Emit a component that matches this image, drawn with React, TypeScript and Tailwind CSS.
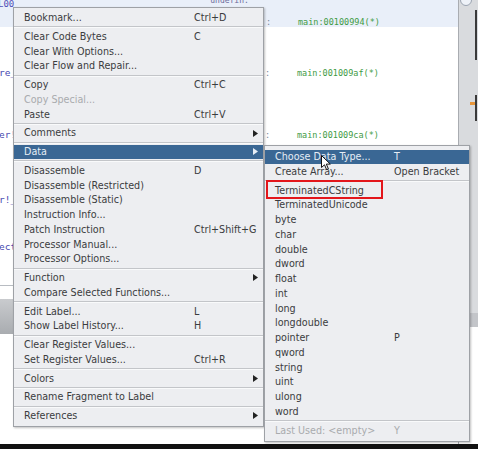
import React from "react";

type Item =
  | { sep: true }
  | {
      sep?: false;
      label: string;
      key?: string;
      sub?: boolean;
      disabled?: boolean;
      active?: boolean;
    };

const mainItems: Item[] = [
  { label: "Bookmark...", key: "Ctrl+D" },
  { sep: true },
  { label: "Clear Code Bytes", key: "C" },
  { label: "Clear With Options..." },
  { label: "Clear Flow and Repair..." },
  { sep: true },
  { label: "Copy", key: "Ctrl+C" },
  { label: "Copy Special...", disabled: true },
  { label: "Paste", key: "Ctrl+V" },
  { sep: true },
  { label: "Comments", sub: true },
  { sep: true },
  { label: "Data", sub: true, active: true },
  { sep: true },
  { label: "Disassemble", key: "D" },
  { label: "Disassemble (Restricted)" },
  { label: "Disassemble (Static)" },
  { label: "Instruction Info..." },
  { label: "Patch Instruction", key: "Ctrl+Shift+G" },
  { label: "Processor Manual..." },
  { label: "Processor Options..." },
  { sep: true },
  { label: "Function", sub: true },
  { label: "Compare Selected Functions..." },
  { sep: true },
  { label: "Edit Label...", key: "L" },
  { label: "Show Label History...", key: "H" },
  { sep: true },
  { label: "Clear Register Values..." },
  { label: "Set Register Values...", key: "Ctrl+R" },
  { sep: true },
  { label: "Colors", sub: true },
  { sep: true },
  { label: "Rename Fragment to Label" },
  { sep: true },
  { label: "References", sub: true },
];

const dataItems: Item[] = [
  { label: "Choose Data Type...", key: "T", active: true },
  { label: "Create Array...", key: "Open Bracket" },
  { sep: true },
  { label: "TerminatedCString" },
  { label: "TerminatedUnicode" },
  { label: "byte" },
  { label: "char" },
  { label: "double" },
  { label: "dword" },
  { label: "float" },
  { label: "int" },
  { label: "long" },
  { label: "longdouble" },
  { label: "pointer", key: "P" },
  { label: "qword" },
  { label: "string" },
  { label: "uint" },
  { label: "ulong" },
  { label: "word" },
  { sep: true },
  { label: "Last Used: <empty>", key: "Y", disabled: true },
];

const Arrow = ({ light }: { light?: boolean }) => (
  <svg width="5" height="7" viewBox="0 0 5 7" className="ml-auto mr-[5px]">
    <path d="M0 0 L5 3.5 L0 7 Z" fill={light ? "#e6edf5" : "#222"} />
  </svg>
);

const Menu = ({ items, labelW }: { items: Item[]; labelW: string }) => (
  <div className="flex flex-col">
    {items.map((it, i) =>
      it.sep ? (
        <div key={i} className="h-[4px] flex flex-col justify-center">
          <div className="h-px bg-[#c3c5c9]" />
          <div className="h-px bg-[#f9fafb]" />
        </div>
      ) : (
        <div
          key={i}
          className={`h-[14.75px] flex items-center pl-[10px] whitespace-nowrap leading-none ${
            it.active ? "bg-[#3a6794] text-[#e6edf5]" : it.disabled ? "text-[#a9abae]" : "text-[#3b3c3e]"
          }`}
        >
          <span className={labelW}>{it.label}</span>
          {it.key && <span>{it.key}</span>}
          {it.sub && <Arrow light={it.active} />}
        </div>
      )
    )}
  </div>
);

const Addr = ({ addr }: { addr: string }) => (
  <div className="ml-[266px] flex text-[8.5px] text-[#3f9b45]">
    <span className="text-[#7a8a9a] w-[32px]">:</span>
    <span>{addr}</span>
  </div>
);

export default function App() {
  return (
    <div className="relative w-[478px] h-[449px] overflow-hidden bg-white font-['DejaVu_Sans',sans-serif] text-[9.6px]">
      {/* listing behind the menu */}
      <div className="flex h-[444px]">
        <div className="w-[458px] h-full flex flex-col font-['DejaVu_Sans_Mono',monospace] leading-none">
          <div className="h-[27px] bg-[#e9eff9] flex flex-col">
            <div className="h-[12px] flex items-start">
              <span className="ml-[-2px] text-[#5050b8] text-[9px]">L00</span>
              <span className="ml-[196px] mt-[-3px] text-[#6a6a9a] text-[8px]">undefin:</span>
            </div>
            <div className="mt-[6px]">
              <Addr addr="main:00100994(*)" />
            </div>
          </div>
          <div className="h-[40px]" />
          <div className="h-[12px] flex items-center text-[#4848b0] text-[9.5px]">
            <span className="w-0 ml-[-1px] overflow-visible">re_</span>
            <Addr addr="main:001009af(*)" />
          </div>
          <div className="h-[50px]" />
          <div className="h-[12px] flex items-center text-[#4848b0] text-[9.5px]">
            <span className="w-0 ml-[-1px] overflow-visible">er!</span>
            <Addr addr="main:001009ca(*)" />
          </div>
          <div className="h-[53px]" />
          <div className="h-[12px] flex items-center text-[#4848b0] text-[9.5px]">
            <span className="ml-[-1px]">r!_</span>
          </div>
          <div className="h-[35px]" />
          <div className="h-[12px] flex items-center text-[#4848b0] text-[9.5px]">
            <span className="ml-[-1px]">ect</span>
          </div>
          <div className="h-[32px]" />
          <div className="w-[14px] h-px bg-[#b8bcc2]" />
          <div className="h-[13px]" />
          <div className="w-[14px] h-[35px] bg-gradient-to-b from-[#c9cbce] to-[#a9acb0]" />
        </div>
        <div className="relative w-[20px] h-full bg-[#d9dbde] border-l border-[#a9acb1] flex flex-col">
          <div className="absolute left-[1px] top-[-6px] w-[12px] h-[12px] rounded-full border border-[#9aa3b0] bg-[#eef2f8]" />
          <div className="absolute right-[1px] top-[10px] w-[2px] h-[50px] bg-[#3a3a3a]" />
          <div className="absolute right-[1px] top-[95px] w-[2px] h-[26px] bg-[#3a3a3a]" />
          <div className="absolute right-[3px] top-[102px] w-[5px] h-[3px] bg-[#e8963a]" />
          <div className="h-[313px]" />
          <div className="h-[14px] bg-[#c3c5c9]" />
          <div className="flex-1 bg-white" />
        </div>
      </div>
      <div className="h-[5px] bg-[#111]" />

      {/* main context menu */}
      <div className="absolute left-[13px] top-[7px] w-[251px] h-[420px] bg-[#edeef1] border border-[#9ea1a6] pt-[2.6px] shadow-[1px_1px_2px_rgba(0,0,0,0.25)]">
        <Menu items={mainItems} labelW="w-[170px]" />
      </div>

      {/* Data submenu */}
      <div className="absolute left-[264px] top-[145px] w-[206px] h-[297px] bg-[#edeef1] border border-[#9ea1a6] pt-[3.6px] shadow-[1px_1px_2px_rgba(0,0,0,0.25)]">
        <Menu items={dataItems} labelW="w-[119px]" />
      </div>

      {/* highlight box */}
      <div className="absolute left-[266px] top-[180px] w-[117px] h-[19px] border-2 border-[#e3161b]" />

      {/* mouse pointer */}
      <svg width="11" height="16" viewBox="0 0 11 16" className="absolute left-[321px] top-[155px]">
        <path d="M0.5 0.5 L0.5 12.5 L3.5 9.8 L5.6 14.6 L7.4 13.8 L5.3 9.1 L9.3 9.1 Z" fill="#fff" stroke="#111" strokeWidth="1" strokeLinejoin="round" />
      </svg>
    </div>
  );
}
